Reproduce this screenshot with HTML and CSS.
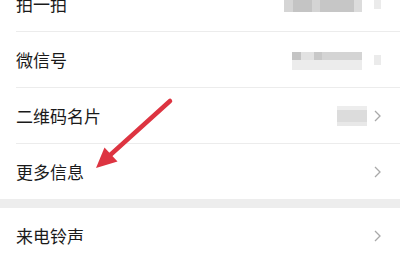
FILE: index.html
```html
<!DOCTYPE html>
<html lang="zh">
<head>
<meta charset="utf-8">
<link rel="stylesheet" href="styles.css">
</head>
<body>
<div class="page">
  <div class="group">
    <div class="row">
      <div class="row-body">
        <span class="label">拍一拍</span>
        <span class="blur blur-1"></span>
        <span class="chev-blur"></span>
      </div>
    </div>
    <div class="row">
      <div class="row-body">
        <span class="label">微信号</span>
        <span class="blur blur-2"></span>
        <span class="chev-blur"></span>
      </div>
    </div>
    <div class="row">
      <div class="row-body">
        <span class="label">二维码名片</span>
        <span class="blur blur-3"></span>
        <svg class="chev" viewBox="0 0 7 12"><polyline points="1,1 6,6 1,11"/></svg>
      </div>
    </div>
    <div class="row last">
      <div class="row-body">
        <span class="label">更多信息</span>
        <svg class="chev" viewBox="0 0 7 12"><polyline points="1,1 6,6 1,11"/></svg>
      </div>
    </div>
  </div>
  <div class="band"></div>
  <div class="group">
    <div class="row last">
      <div class="row-body">
        <span class="label">来电铃声</span>
        <svg class="chev" viewBox="0 0 7 12"><polyline points="1,1 6,6 1,11"/></svg>
      </div>
    </div>
  </div>
  <svg class="arrow" viewBox="0 0 400 260" width="400" height="260">
    <line x1="170" y1="101" x2="108" y2="157" stroke="#dd3441" stroke-width="4.5" stroke-linecap="round"/>
    <polygon points="96,168 117.5,161.5 104.5,147.5" fill="#dd3441"/>
  </svg>
</div>
</body>
</html>
```
FILE: styles.css
```css
html, body {
  margin: 0;
  padding: 0;
  background: #ffffff;
}
body {
  width: 400px;
  height: 260px;
  overflow: hidden;
  font-family: "Noto Sans CJK SC", "Noto Sans", sans-serif;
  color: #1a1a1a;
}
.page {
  position: relative;
  margin-top: -24px;
}
.row {
  padding-left: 16px;
  background: #fff;
}
.row-body {
  height: 56px;
  box-sizing: border-box;
  border-bottom: 1px solid #ececec;
  display: flex;
  align-items: center;
  padding-right: 19px;
}
.row.last .row-body {
  border-bottom: none;
  height: 55px;
}
.label {
  font-size: 17px;
  line-height: 1;
  flex: 1;
}
.band {
  height: 9px;
  background: #ededed;
}
.chev {
  width: 7px;
  height: 12px;
  flex: none;
}
.chev polyline {
  fill: none;
  stroke: #a9a9a9;
  stroke-width: 1.3;
}
.chev-blur {
  display: block;
  flex: none;
  width: 7px;
  height: 10px;
  background: #ebebeb;
}
.blur {
  display: block;
  flex: none;
}
.blur-1 {
  width: 78px;
  height: 16px;
  margin-right: 12px;
  background:
    linear-gradient(90deg, #d5d5d5 0 9px, #c4c4c4 9px 28px, #d4d4d4 28px 36px, #c6c6c6 36px 70px, #dcdcdc 70px);
}
.blur-2 {
  width: 70px;
  height: 18px;
  margin-right: 12px;
  margin-top: 2px;
  background:
    linear-gradient(180deg, transparent 0 8px, #ececec 8px 100%),
    linear-gradient(90deg, #c4c4c4 0 9px, #e2e2e2 9px 22px, #c8c8c8 22px 30px, #d4d4d4 30px 70px);
}
.blur-3 {
  width: 30px;
  height: 20px;
  margin-right: 7px;
  background:
    linear-gradient(180deg, #ededed 0 4px, #dcdcdc 4px 16px, #e8e8e8 16px);
}
.arrow {
  position: absolute;
  left: 0;
  top: 24px;
  pointer-events: none;
}
```
